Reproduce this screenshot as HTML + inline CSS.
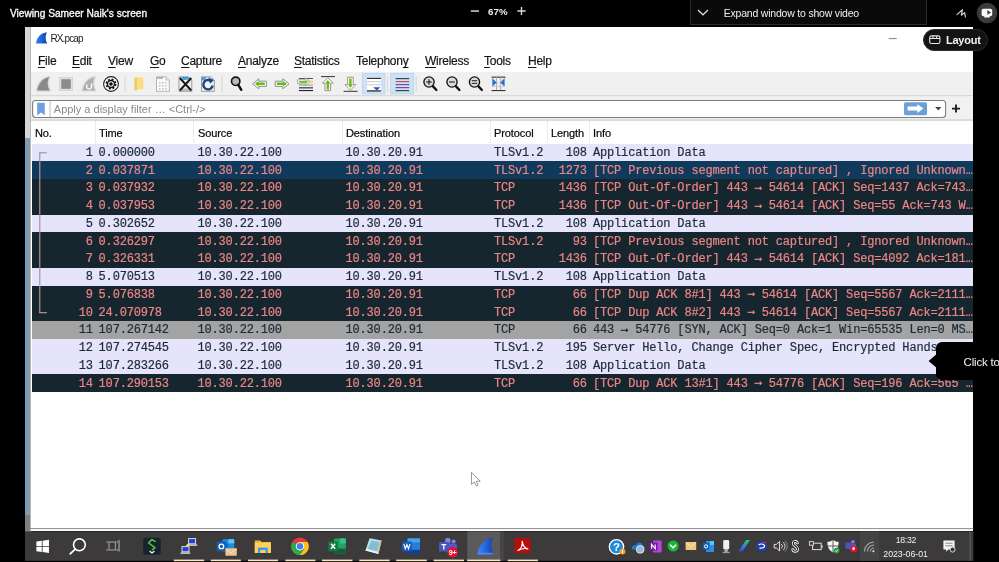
<!DOCTYPE html>
<html>
<head>
<meta charset="utf-8">
<style>
html,body{margin:0;padding:0;background:#000;}
body{width:999px;height:562px;overflow:hidden;position:relative;font-family:"Liberation Sans",sans-serif;}
.abs{position:absolute;}
body>*{will-change:transform;}
#top{left:0;top:0;width:999px;height:27px;background:#000;color:#fff;}
#title{left:10.3px;top:8px;font-size:10.2px;letter-spacing:-0.02px;white-space:nowrap;color:#f6f6f6;-webkit-text-stroke:0.35px #f6f6f6;}
#zoom{left:487.8px;top:5.9px;font-size:9.7px;font-weight:bold;color:#eee;white-space:nowrap;letter-spacing:0.05px;}
#expand{left:690px;top:-1px;width:235px;height:24.3px;border:1px solid #2c2c2c;background:#0a0a0a;}
#expand span{position:absolute;left:32.7px;top:7.3px;font-size:10.5px;letter-spacing:-0.2px;color:#f0f0f0;white-space:nowrap;}
#win{left:25px;top:27px;width:948px;height:504px;background:#fff;}
#lborder{left:25px;top:27px;width:5px;height:504.5px;background:#d6d6d6;border-right:0.7px solid #b8b8b8;}
#lborder2{left:25px;top:138px;width:5px;height:376.5px;background:#809ab2;}
#lborder3{left:25px;top:514.5px;width:5px;height:17px;background:#7f7f80;}
#wtitle{left:50.5px;top:33.2px;font-size:10px;color:#222;letter-spacing:-0.9px;}
#menu{left:0;top:0;}
.mi{position:absolute;top:54px;font-size:12px;letter-spacing:-0.25px;color:#141414;white-space:nowrap;-webkit-text-stroke:0.18px #141414;}
.mi u{text-decoration:underline;text-underline-offset:2px;text-decoration-thickness:1px;}
#toolbar{left:31px;top:72px;width:942px;height:24px;background:#f0f0f0;}
#filterrow{left:31px;top:96px;width:942px;height:24px;background:#f1f1f1;}
#filter{left:32px;top:100px;width:913px;height:16px;border:1px solid #8a8a8a;border-radius:3px;background:#fff;}
#ftext{left:53.8px;top:103.2px;font-size:11px;color:#8a8a8a;white-space:nowrap;}
#hdr{left:32px;top:121px;width:941px;height:22px;background:#fff;}
.h{position:absolute;top:126.7px;font-size:11px;color:#0a0a0a;white-space:nowrap;letter-spacing:-0.1px;-webkit-text-stroke:0.22px #0a0a0a;}
.sep{position:absolute;top:121px;width:1px;height:22px;background:#ebebeb;}
#share{left:0;top:0;width:999px;height:562px;filter:blur(0.45px);}
#rows{position:absolute;left:0;top:0;width:999px;height:0;}
.row{position:absolute;left:31.6px;width:941.4px;height:17.8px;font-family:"Liberation Mono",monospace;font-size:12px;letter-spacing:-0.17px;-webkit-text-stroke:0.2px currentColor;line-height:17.75px;white-space:pre;overflow:hidden;}
.row span{position:absolute;top:1.3px;}
.row i{font-style:normal;position:relative;top:-1.6px;-webkit-text-stroke:0.5px currentColor;}
.lav{background:#e6e4fb;color:#1c2a38;}
.blk{background:#15262e;color:#ec8585;}
.sel{background:#0f3a5b;color:#ec8585;}
.gry{background:#a3a3a3;color:#1c2a38;}
#taskbar{left:25px;top:531px;width:948px;height:30px;background:#3a3a3a;}
#tooltip{left:936.4px;top:342px;width:70px;height:38px;background:#000;border-radius:6px;}
#tooltip span{position:absolute;left:27.6px;top:13.6px;font-size:11.5px;letter-spacing:-0.2px;color:#f4f4f4;white-space:nowrap;}
#layout{left:923px;top:28.8px;width:63.4px;height:20px;border:1px solid #2c2c2c;border-radius:12px;background:#131313;}
#layout span{position:absolute;left:21.9px;top:4.2px;font-size:11px;font-weight:bold;color:#f4f4f4;letter-spacing:-0.23px;}
</style>
</head>
<body>
<div id="top" class="abs"></div>
<div id="title" class="abs">Viewing Sameer Naik's screen</div>
<div id="zoom" class="abs">67%</div>

<div id="expand" class="abs"><span>Expand window to show video</span></div>

<!--TOP--><svg class="abs" style="left:0;top:0" width="999" height="56" viewBox="0 0 999 56">
<rect x="470.8" y="10.3" width="8.2" height="1.5" fill="#d8d8d8"/>
<path d="M517.4 11 L525.6 11 M521.5 6.9 L521.5 15.1" stroke="#d8d8d8" stroke-width="1.4"/>
<path d="M698 10 L703 14.8 L708 10" fill="none" stroke="#e0e0e0" stroke-width="1.2"/>
<path d="M957 14.6 L962.4 9.6 L961.4 15.2 L964.6 12.6 L965.4 17" fill="none" stroke="#cfcfcf" stroke-width="1.2" stroke-linejoin="round" stroke-linecap="round"/>
<circle cx="987" cy="13" r="10.3" fill="#3b3b3b"/>
<rect x="981.6" y="8.8" width="10.6" height="7.4" rx="1.8" fill="#fafafa"/>
<rect x="984.2" y="16" width="5.6" height="1.6" rx="0.6" fill="#fafafa"/>
<path d="M987.4 10 L991 12.4 L987.4 14.8 Z" fill="#3b3b3b"/>
</svg><!--/TOP-->
<div id="share" class="abs">
<div id="win" class="abs"></div>
<div id="lborder" class="abs"></div>
<div id="lborder2" class="abs"></div>
<div id="lborder3" class="abs"></div>
<div id="wtitle" class="abs">RX.pcap</div>

<div class="mi" style="left:38px"><u>F</u>ile</div>
<div class="mi" style="left:72px"><u>E</u>dit</div>
<div class="mi" style="left:108px"><u>V</u>iew</div>
<div class="mi" style="left:150px"><u>G</u>o</div>
<div class="mi" style="left:181px"><u>C</u>apture</div>
<div class="mi" style="left:238px"><u>A</u>nalyze</div>
<div class="mi" style="left:294px"><u>S</u>tatistics</div>
<div class="mi" style="left:356px">Telephon<u>y</u></div>
<div class="mi" style="left:425px"><u>W</u>ireless</div>
<div class="mi" style="left:484px"><u>T</u>ools</div>
<div class="mi" style="left:528px"><u>H</u>elp</div>

<div id="toolbar" class="abs"></div>
<div id="filterrow" class="abs"></div>
<!--TB--><svg class="abs" style="left:0;top:72px" width="999" height="50" viewBox="0 72 999 50">
<!-- toolbar bottom lines -->
<rect x="31" y="95" width="942" height="1.2" fill="#d9d9d9"/>
<rect x="31" y="119.4" width="942" height="1.3" fill="#cdcdcd"/>
<!-- 1 fin gray -->
<path d="M37.2 90.4 C38.2 83.8 42.4 78.4 49.2 77 C47 81.4 47.2 86.4 49.8 90.4 Z" fill="#898989" stroke="#dadada" stroke-width="2.8" stroke-linejoin="round" paint-order="stroke"/>
<!-- 2 stop -->
<rect x="59.5" y="77.5" width="13" height="13" fill="#e2e2e2" stroke="#d0d0d0" stroke-width="0.8"/>
<rect x="61.2" y="79.2" width="9.6" height="9.6" fill="#8c8c8c"/>
<!-- 3 restart fin -->
<path d="M82.7 90.4 C83.7 83.8 87.9 78.4 94.7 77 C92.5 81.4 92.7 86.4 95.3 90.4 Z" fill="#b0b0b0" stroke="#dedede" stroke-width="2.8" stroke-linejoin="round" paint-order="stroke"/>
<path d="M91.6 83.2 L91.6 86.6 A2.5 2.5 0 1 1 87.4 84.6" fill="none" stroke="#f6f6f6" stroke-width="1.4"/>
<!-- 4 options -->
<circle cx="111" cy="84" r="7.4" fill="#fff" stroke="#222" stroke-width="1.1"/>
<circle cx="111" cy="84" r="4.7" fill="none" stroke="#111" stroke-width="1.5" stroke-dasharray="2.0 1.69"/>
<circle cx="111" cy="84" r="4.2" fill="#111"/>
<circle cx="111" cy="84" r="2.8" fill="#fff"/>
<circle cx="111" cy="84" r="1.8" fill="#111"/>
<!-- sep -->
<rect x="124.6" y="76" width="1" height="16" fill="#d4d4d4"/>
<!-- 5 folder -->
<path d="M134.5 78 L137.5 77.2 L143.5 77.8 L143.5 89 L137 89.2 L136.5 90.8 L134.5 90 Z" fill="#f9dd84"/>
<path d="M134.5 78 L137 77.4 L137 89.2 L136.5 90.8 L134.5 90 Z" fill="#f0cb62"/>
<!-- 6 save doc -->
<path d="M156.5 76.8 L166 76.8 L169.3 80 L169.3 91.3 L156.5 91.3 Z" fill="#fbfbfb" stroke="#b5b5b5" stroke-width="1"/>
<rect x="157" y="77.2" width="6" height="1.6" fill="#a8a8a8"/>
<path d="M166 76.8 L166 80 L169.3 80" fill="#e6e6e6" stroke="#b5b5b5" stroke-width="0.8"/>
<g fill="#c2c6cc"><rect x="159" y="82" width="1.6" height="1.6"/><rect x="162" y="82" width="1.6" height="1.6"/><rect x="165" y="82" width="1.6" height="1.6"/><rect x="159" y="85" width="1.6" height="1.6"/><rect x="162" y="85" width="1.6" height="1.6"/><rect x="165" y="85" width="1.6" height="1.6"/><rect x="159" y="88" width="1.6" height="1.6"/><rect x="162" y="88" width="1.6" height="1.6"/><rect x="165" y="88" width="1.6" height="1.6"/></g>
<!-- 7 close doc -->
<path d="M179 76.8 L188.5 76.8 L191.8 80 L191.8 91.3 L179 91.3 Z" fill="#f1f1f1" stroke="#9a9a9a" stroke-width="1"/>
<path d="M181.5 77 L188.5 77 L189.5 79.5 L183 80 Z" fill="#3f9ddb"/>
<rect x="181" y="88.5" width="9" height="2.3" fill="#b8bcc0"/>
<path d="M179.8 78 L191.3 90.5 M191.3 78 L179.8 90.5" stroke="#151515" stroke-width="1.9" fill="none"/>
<!-- 8 reload doc -->
<path d="M201.5 76.8 L211 76.8 L214.3 80 L214.3 91.3 L201.5 91.3 Z" fill="#f3f3f3" stroke="#9a9a9a" stroke-width="1"/>
<path d="M202 77.2 L207 77.2 L204 80.5 L202 80.5 Z" fill="#3f9ddb"/>
<path d="M210.4 80.6 A4.7 4.7 0 1 0 212.7 85.6" fill="none" stroke="#1b4488" stroke-width="2.4"/>
<path d="M208.4 77.6 L214 80 L210 83.8 Z" fill="#1b4488"/>
<!-- sep -->
<rect x="221.6" y="76" width="1" height="16" fill="#d4d4d4"/>
<!-- 9 find -->
<circle cx="235.7" cy="81.3" r="4.2" fill="#b9b9b9" stroke="#111" stroke-width="1.6"/>
<path d="M238.3 84.8 L241.3 89.8" stroke="#111" stroke-width="2.4" stroke-linecap="round"/>
<!-- 10 back -->
<path d="M252.6 83.8 L258.8 78.8 L258.8 81.2 L266.4 81.2 L266.4 86.4 L258.8 86.4 L258.8 88.8 Z" fill="#fff" stroke="#8e8e8e" stroke-width="1" stroke-linejoin="round"/>
<path d="M254.8 83.8 L258.4 81 L258.4 82.6 L264.8 82.6 L264.8 85 L258.4 85 L258.4 86.6 Z" fill="#68b81a"/>
<!-- 11 fwd -->
<path d="M289 83.8 L282.8 78.8 L282.8 81.2 L275.2 81.2 L275.2 86.4 L282.8 86.4 L282.8 88.8 Z" fill="#fff" stroke="#8e8e8e" stroke-width="1" stroke-linejoin="round"/>
<path d="M286.8 83.8 L283.2 81 L283.2 82.6 L276.8 82.6 L276.8 85 L283.2 85 L283.2 86.6 Z" fill="#68b81a"/>
<!-- 12 goto -->
<rect x="299" y="78" width="14" height="1" fill="#555"/>
<rect x="306" y="81.3" width="7" height="1" fill="#999"/>
<rect x="299" y="84.6" width="14" height="1" fill="#999"/>
<rect x="299" y="87.3" width="14" height="1.1" fill="#222"/>
<rect x="299" y="90" width="14" height="1.1" fill="#222"/>
<rect x="310" y="80.4" width="2.8" height="2.8" fill="#f6e25c"/>
<path d="M310 81.8 L305.2 77.8 L305.2 79.8 L297.6 79.8 L297.6 83.8 L305.2 83.8 L305.2 85.8 Z" fill="#fff" stroke="#9c9c9c" stroke-width="0.9" stroke-linejoin="round"/>
<path d="M308 81.8 L305.5 79.7 L305.5 80.9 L299.2 80.9 L299.2 82.7 L305.5 82.7 L305.5 83.9 Z" fill="#6cba1e"/>
<!-- 13 top -->
<rect x="321" y="76" width="14" height="1.1" fill="#444"/>
<path d="M327.8 77.6 L333.2 83.2 L330.6 83.2 L330.6 90.6 L325 90.6 L325 83.2 L322.4 83.2 Z" fill="#fff" stroke="#8c8c8c" stroke-width="0.9" stroke-linejoin="round"/>
<path d="M327.8 80 L330.6 83.4 L329 83.4 L329 89.4 L326.6 89.4 L326.6 83.4 L325 83.4 Z" fill="#6cba1e"/>
<!-- 14 bottom -->
<rect x="343.6" y="90.8" width="14" height="1.1" fill="#444"/>
<path d="M350.4 90.2 L355.8 84.6 L353.2 84.6 L353.2 77.2 L347.6 77.2 L347.6 84.6 L345 84.6 Z" fill="#fff" stroke="#8c8c8c" stroke-width="0.9" stroke-linejoin="round"/>
<path d="M350.4 87.8 L353.2 84.4 L351.6 84.4 L351.6 78.4 L349.2 78.4 L349.2 84.4 L347.6 84.4 Z" fill="#6cba1e"/>
<!-- 15 autoscroll -->
<rect x="362.3" y="73.3" width="22.6" height="20.6" fill="#cbe2f8" stroke="#b4d4f2" stroke-width="0.8"/>
<rect x="367" y="77.6" width="14" height="12.6" fill="#fff"/>
<rect x="367" y="77.8" width="14" height="1.2" fill="#333"/>
<rect x="367" y="81.2" width="14" height="1" fill="#c8c8c8"/>
<rect x="367" y="84.3" width="14" height="1" fill="#c8c8c8"/>
<rect x="367" y="90.3" width="14" height="1.3" fill="#333"/>
<path d="M373.2 87.2 L380.4 87.2 L376.8 90.6 Z" fill="#2c50b4"/>
<rect x="387" y="76" width="1" height="16" fill="#d9d9d9"/>
<!-- 16 colorize -->
<rect x="390.7" y="73.3" width="23" height="20.6" fill="#cbe2f8" stroke="#b4d4f2" stroke-width="0.8"/>
<rect x="395.6" y="78" width="13.6" height="1.2" fill="#444"/>
<rect x="395.6" y="81" width="13.6" height="1.2" fill="#d6474a"/>
<rect x="395.6" y="84" width="13.6" height="1.2" fill="#4562b4"/>
<rect x="395.6" y="87" width="13.6" height="1.2" fill="#9a4078"/>
<rect x="395.6" y="90" width="13.6" height="1.2" fill="#444"/>
<rect x="415.7" y="76" width="1" height="16" fill="#dcd6d2"/>
<!-- 17-19 zoom -->
<g stroke="#111" fill="none">
<circle cx="429" cy="82" r="5.1" fill="#dadada" stroke-width="1.35"/><path d="M433 86.4 L436.4 90" stroke-width="2.3" stroke-linecap="round"/><path d="M426.2 82 L431.8 82 M429 79.2 L429 84.8" stroke-width="1.05"/>
<circle cx="452" cy="82" r="5.1" fill="#dadada" stroke-width="1.35"/><path d="M456 86.4 L459.4 90" stroke-width="2.3" stroke-linecap="round"/><path d="M449.2 82 L454.8 82" stroke-width="1.05"/>
<circle cx="474.5" cy="82" r="5.1" fill="#dadada" stroke-width="1.35"/><path d="M478.5 86.4 L481.9 90" stroke-width="2.3" stroke-linecap="round"/><path d="M471.8 80.7 L477.2 80.7 M471.8 83.3 L477.2 83.3" stroke-width="0.95"/>
</g>
<!-- 20 resize cols -->
<rect x="491.5" y="76.6" width="14" height="1.1" fill="#333"/>
<rect x="491.5" y="90" width="14" height="1.1" fill="#333"/>
<rect x="496" y="77" width="0.9" height="13" fill="#aaa"/><rect x="500.2" y="77" width="0.9" height="13" fill="#aaa"/>
<rect x="493" y="82.6" width="11" height="0.8" fill="#c4c4c4"/><rect x="493" y="86" width="11" height="0.8" fill="#c4c4c4"/>
<path d="M492.4 78 L496.6 82.4 L492.4 86.8 Z" fill="#2f6fd0"/>
<path d="M504.6 78 L500.4 82.4 L504.6 86.8 Z" fill="#2f6fd0"/>
<!-- filter bar -->
<rect x="32.6" y="100.5" width="913" height="17" rx="3" fill="#fff" stroke="#7d7d7d" stroke-width="1.1"/>
<rect x="49.6" y="101" width="0.9" height="16" fill="#b5b5b5"/>
<path d="M37.2 102.8 L44.8 102.8 L44.8 115.6 L41 112.4 L37.2 115.6 Z" fill="#70a0de"/>
<rect x="904" y="102.2" width="23" height="13" rx="1.6" fill="#6d9fd8"/>
<path d="M907.6 106.6 L917.4 106.6 L917.4 104.2 L923.4 108.6 L917.4 113 L917.4 110.6 L907.6 110.6 Z" fill="#fff"/>
<path d="M935.2 107 L941.4 107 L938.3 110.6 Z" fill="#444"/>
<path d="M952 108.6 L960 108.6 M956 104.6 L956 112.6" stroke="#1e1e1e" stroke-width="1.9"/>
</svg>
<!--/TB-->
<div id="ftext" class="abs">Apply a display filter &#8230; &lt;Ctrl-/&gt;</div>

<div id="hdr" class="abs"></div>
<div class="h" style="left:35px">No.</div>
<div class="h" style="left:99px">Time</div>
<div class="h" style="left:198px">Source</div>
<div class="h" style="left:346px">Destination</div>
<div class="h" style="left:494px">Protocol</div>
<div class="h" style="left:551px">Length</div>
<div class="h" style="left:593px">Info</div>
<div class="sep" style="left:95px"></div>
<div class="sep" style="left:193px"></div>
<div class="sep" style="left:342px"></div>
<div class="sep" style="left:490px"></div>
<div class="sep" style="left:547px"></div>
<div class="sep" style="left:589px"></div>

<div id="rows">
<div class="row lav" style="top:143.60px"><span style="right:880.3px">1</span><span style="left:67px">0.000000</span><span style="left:165.9px">10.30.22.100</span><span style="left:313.9px">10.30.20.91</span><span style="left:462.4px">TLSv1.2</span><span style="right:386.2px">108</span><span style="left:561.4px">Application Data</span></div>
<div class="row sel" style="top:161.35px"><span style="right:880.3px">2</span><span style="left:67px">0.037871</span><span style="left:165.9px">10.30.22.100</span><span style="left:313.9px">10.30.20.91</span><span style="left:462.4px">TLSv1.2</span><span style="right:386.2px">1273</span><span style="left:561.4px">[TCP Previous segment not captured] , Ignored Unknown…</span></div>
<div class="row blk" style="top:179.10px"><span style="right:880.3px">3</span><span style="left:67px">0.037932</span><span style="left:165.9px">10.30.22.100</span><span style="left:313.9px">10.30.20.91</span><span style="left:462.4px">TCP</span><span style="right:386.2px">1436</span><span style="left:561.4px">[TCP Out-Of-Order] 443 <i>→</i> 54614 [ACK] Seq=1437 Ack=743…</span></div>
<div class="row blk" style="top:196.85px"><span style="right:880.3px">4</span><span style="left:67px">0.037953</span><span style="left:165.9px">10.30.22.100</span><span style="left:313.9px">10.30.20.91</span><span style="left:462.4px">TCP</span><span style="right:386.2px">1436</span><span style="left:561.4px">[TCP Out-Of-Order] 443 <i>→</i> 54614 [ACK] Seq=55 Ack=743 W…</span></div>
<div class="row lav" style="top:214.60px"><span style="right:880.3px">5</span><span style="left:67px">0.302652</span><span style="left:165.9px">10.30.22.100</span><span style="left:313.9px">10.30.20.91</span><span style="left:462.4px">TLSv1.2</span><span style="right:386.2px">108</span><span style="left:561.4px">Application Data</span></div>
<div class="row blk" style="top:232.35px"><span style="right:880.3px">6</span><span style="left:67px">0.326297</span><span style="left:165.9px">10.30.22.100</span><span style="left:313.9px">10.30.20.91</span><span style="left:462.4px">TLSv1.2</span><span style="right:386.2px">93</span><span style="left:561.4px">[TCP Previous segment not captured] , Ignored Unknown…</span></div>
<div class="row blk" style="top:250.10px"><span style="right:880.3px">7</span><span style="left:67px">0.326331</span><span style="left:165.9px">10.30.22.100</span><span style="left:313.9px">10.30.20.91</span><span style="left:462.4px">TCP</span><span style="right:386.2px">1436</span><span style="left:561.4px">[TCP Out-Of-Order] 443 <i>→</i> 54614 [ACK] Seq=4092 Ack=181…</span></div>
<div class="row lav" style="top:267.85px"><span style="right:880.3px">8</span><span style="left:67px">5.070513</span><span style="left:165.9px">10.30.22.100</span><span style="left:313.9px">10.30.20.91</span><span style="left:462.4px">TLSv1.2</span><span style="right:386.2px">108</span><span style="left:561.4px">Application Data</span></div>
<div class="row blk" style="top:285.60px"><span style="right:880.3px">9</span><span style="left:67px">5.076838</span><span style="left:165.9px">10.30.22.100</span><span style="left:313.9px">10.30.20.91</span><span style="left:462.4px">TCP</span><span style="right:386.2px">66</span><span style="left:561.4px">[TCP Dup ACK 8#1] 443 <i>→</i> 54614 [ACK] Seq=5567 Ack=2111…</span></div>
<div class="row blk" style="top:303.35px"><span style="right:880.3px">10</span><span style="left:67px">24.070978</span><span style="left:165.9px">10.30.22.100</span><span style="left:313.9px">10.30.20.91</span><span style="left:462.4px">TCP</span><span style="right:386.2px">66</span><span style="left:561.4px">[TCP Dup ACK 8#2] 443 <i>→</i> 54614 [ACK] Seq=5567 Ack=2111…</span></div>
<div class="row gry" style="top:321.10px"><span style="right:880.3px">11</span><span style="left:67px">107.267142</span><span style="left:165.9px">10.30.22.100</span><span style="left:313.9px">10.30.20.91</span><span style="left:462.4px">TCP</span><span style="right:386.2px">66</span><span style="left:561.4px">443 <i>→</i> 54776 [SYN, ACK] Seq=0 Ack=1 Win=65535 Len=0 MS…</span></div>
<div class="row lav" style="top:338.85px"><span style="right:880.3px">12</span><span style="left:67px">107.274545</span><span style="left:165.9px">10.30.22.100</span><span style="left:313.9px">10.30.20.91</span><span style="left:462.4px">TLSv1.2</span><span style="right:386.2px">195</span><span style="left:561.4px">Server Hello, Change Cipher Spec, Encrypted Hands…</span></div>
<div class="row lav" style="top:356.60px"><span style="right:880.3px">13</span><span style="left:67px">107.283266</span><span style="left:165.9px">10.30.22.100</span><span style="left:313.9px">10.30.20.91</span><span style="left:462.4px">TLSv1.2</span><span style="right:386.2px">108</span><span style="left:561.4px">Application Data</span></div>
<div class="row blk" style="top:374.35px"><span style="right:880.3px">14</span><span style="left:67px">107.290153</span><span style="left:165.9px">10.30.22.100</span><span style="left:313.9px">10.30.20.91</span><span style="left:462.4px">TCP</span><span style="right:386.2px">66</span><span style="left:561.4px">[TCP Dup ACK 13#1] 443 <i>→</i> 54776 [ACK] Seq=196 Ack=565 …</span></div>
</div><!--/rows-->

<!--TREE--><svg class="abs" style="left:0;top:27px" width="999" height="380" viewBox="0 27 999 380">
<defs><linearGradient id="gf2" x1="0" y1="0" x2="1" y2="0"><stop offset="0" stop-color="#3580ea"/><stop offset="0.55" stop-color="#1f60d6"/><stop offset="1" stop-color="#143fa8"/></linearGradient></defs>
<path d="M36 43.5 C36.8 37.4 40.4 33 46.9 32.2 C45.2 35.8 45.2 39.8 47.2 43.5 Z" fill="url(#gf2)"/>
<rect x="888.8" y="38" width="7.8" height="1.1" fill="#8a8a8a"/>
<g fill="#8d8d92">
<rect x="39.3" y="152.3" width="7.6" height="1"/>
<rect x="39.3" y="152.3" width="1" height="9"/>
<rect x="39.3" y="214.6" width="1" height="17.8"/>
<rect x="39.3" y="267.8" width="1" height="17.8"/>
</g>
<g fill="#d9a3a4">
<rect x="39.3" y="161.3" width="1" height="53.3"/>
<rect x="39.3" y="232.4" width="1" height="35.4"/>
<rect x="39.3" y="285.6" width="1" height="27.4"/>
<rect x="39.3" y="312.2" width="7.6" height="1"/>
</g>
</svg><!--/TREE-->
<!--TASK--><svg class="abs" style="left:0;top:526px" width="999" height="36" viewBox="0 526 999 36">
<rect x="30" y="528" width="943.4" height="1.1" fill="#969696"/>
<rect x="25" y="531.4" width="948.4" height="29.4" fill="#3c3a3b"/>
<rect x="969.6" y="531.4" width="1.2" height="29.4" fill="#5c5a5b"/>
<!-- active wireshark -->
<rect x="467.2" y="531.4" width="33.2" height="29.4" fill="#5b595a"/>
<rect x="500.4" y="531.4" width="3.4" height="29.4" fill="#474546"/>
<rect x="859.6" y="531.4" width="19.6" height="29.4" fill="#454344"/>
<!-- underlines -->
<g fill="#f7e4bd">
<rect x="173.8" y="559.6" width="30.4" height="1.6"/><rect x="210.8" y="559.6" width="30" height="1.6"/><rect x="248" y="559.6" width="30" height="1.6"/><rect x="285.4" y="559.6" width="30" height="1.6"/>
<rect x="322" y="559.6" width="30.4" height="1.6"/><rect x="359.3" y="559.6" width="30.3" height="1.6"/><rect x="396.2" y="559.6" width="30.6" height="1.6"/><rect x="433.6" y="559.6" width="30.4" height="1.6"/>
<rect x="467.2" y="559.6" width="33.2" height="1.6"/><rect x="507.7" y="559.6" width="30.2" height="1.6"/>
</g>
<!-- windows -->
<g fill="#fff"><path d="M36.4 541.6 L41.8 540.8 L41.8 546 L36.4 546 Z"/><path d="M42.6 540.7 L49 539.8 L49 546 L42.6 546 Z"/><path d="M36.4 546.8 L41.8 546.8 L41.8 552 L36.4 551.2 Z"/><path d="M42.6 546.8 L49 546.8 L49 553 L42.6 552.1 Z"/></g>
<!-- search -->
<circle cx="79.4" cy="544.8" r="5.9" fill="none" stroke="#fff" stroke-width="1.6"/>
<path d="M75.2 549.2 L70.2 553.9" stroke="#fff" stroke-width="1.7" stroke-linecap="round"/>
<!-- task view -->
<g fill="none" stroke="#9c9c9c" stroke-width="1.1"><rect x="109" y="542" width="6.4" height="8"/><path d="M107.2 541 L107.2 543 M107.2 549 L107.2 551 M117.2 541 L117.2 543 M117.2 549 L117.2 551"/></g>
<rect x="118.4" y="540" width="1.3" height="11.6" fill="#9c9c9c"/>
<!-- green S app -->
<rect x="143.2" y="537.8" width="17.6" height="17" rx="2" fill="#17242e"/>
<path d="M155.6 541.6 L151.8 539.6 L148.6 543 L155 547.6 L152 550" fill="none" stroke="#5cc93c" stroke-width="1.5" stroke-linejoin="round"/>
<path d="M149.6 551 L152 553 L154.4 551" fill="none" stroke="#fff" stroke-width="1.1"/>
<!-- network -->
<rect x="188.6" y="538.6" width="7" height="5.2" fill="#2a3fd6" stroke="#e8e8e8" stroke-width="0.9"/><rect x="187.6" y="544.4" width="9.6" height="1.4" fill="#e0e0e0"/>
<rect x="182" y="546.6" width="7" height="5.2" fill="#2a3fd6" stroke="#e8e8e8" stroke-width="0.9"/><rect x="180.6" y="552.4" width="9.6" height="1.4" fill="#e0e0e0"/>
<path d="M186.4 546 L189.4 543.6" stroke="#f2e24a" stroke-width="1.8"/>
<!-- outlook -->
<rect x="222.6" y="539.2" width="11.6" height="12.4" rx="1" fill="#1a8fe0"/>
<rect x="228.4" y="539.2" width="5.8" height="4.2" fill="#5cc4f5"/><rect x="222.6" y="543.4" width="5.8" height="4.2" fill="#0f6cbd"/>
<rect x="216.6" y="541.6" width="9.6" height="9.6" rx="1.2" fill="#0f5fb3"/>
<circle cx="221.4" cy="546.4" r="2.3" fill="none" stroke="#fff" stroke-width="1.3"/>
<rect x="225.4" y="548.2" width="11.4" height="7.6" rx="0.8" fill="#f1c18c"/>
<path d="M225.8 548.8 L231.1 553 L236.4 548.8" fill="none" stroke="#fbe6cc" stroke-width="1"/>
<!-- folder -->
<path d="M254.8 540.6 L260.4 540.6 L261.6 542 L270.9 542 L270.9 553 L254.8 553 Z" fill="#f2b62c"/>
<rect x="254.8" y="542.6" width="16.1" height="10.4" fill="#fbd25c"/>
<rect x="258" y="547.6" width="9.8" height="5.4" fill="#3b9bea"/><rect x="260.2" y="550" width="5.4" height="3" fill="#fbd25c"/>
<!-- chrome -->
<circle cx="300" cy="546.3" r="8.8" fill="#e33b2e"/>
<path d="M300 546.3 L292.4 541.9 A8.8 8.8 0 0 0 300 555.1 L304.4 548.9 Z" fill="#2da94f"/>
<path d="M300 546.3 L304.4 548.9 L300 555.1 A8.8 8.8 0 0 0 307.6 541.9 L300 541.9 Z" fill="#fcc31e"/>
<circle cx="300" cy="546.3" r="4.1" fill="#fff"/><circle cx="300" cy="546.3" r="3.2" fill="#3f82ef"/>
<!-- excel -->
<rect x="334" y="538.4" width="11.8" height="15.4" rx="1" fill="#21a366"/><rect x="339.9" y="538.4" width="5.9" height="5.2" fill="#33c481"/><rect x="334" y="548.6" width="11.8" height="5.2" fill="#185c37"/>
<rect x="328.2" y="541.4" width="9.8" height="9.8" rx="1.2" fill="#107c41"/>
<path d="M331 543.8 L335.2 548.8 M335.2 543.8 L331 548.8" stroke="#fff" stroke-width="1.4"/>
<!-- notepad -->
<path d="M369.6 538.2 L381.6 540.6 L378.4 554 L365.4 550.6 Z" fill="#b9e0ee"/>
<path d="M371.4 540.6 L379.6 542.2 L377 551.8 L367.6 549.4 Z" fill="#84bcd2"/>
<path d="M365.4 550.6 L378.4 554 L377.4 551.6 L366.6 548.8 Z" fill="#e8f2f6"/>
<path d="M379.8 541 L381.6 540.6 L378.4 554 L377.4 552 Z" fill="#d9c38a"/>
<!-- word -->
<rect x="407.6" y="538.4" width="12.4" height="15.4" rx="1" fill="#2b7cd3"/><rect x="407.6" y="538.4" width="12.4" height="4" fill="#41a5ee"/><rect x="407.6" y="549.8" width="12.4" height="4" fill="#103f91"/>
<rect x="402" y="541.4" width="9.8" height="9.8" rx="1.2" fill="#185abd"/>
<path d="M403.8 544 L405.3 548.8 L406.9 544.6 L408.5 548.8 L410 544" fill="none" stroke="#fff" stroke-width="1.1"/>
<!-- teams -->
<circle cx="453.6" cy="541.6" r="2" fill="#7b83eb"/><circle cx="447.8" cy="540.6" r="2.8" fill="#7b83eb"/>
<rect x="444.6" y="543.6" width="12.4" height="8" rx="2.4" fill="#5059c9"/>
<rect x="439" y="542" width="9.6" height="9.6" rx="1.2" fill="#4b53bc"/>
<path d="M441.4 544.6 L446.2 544.6 M443.8 544.6 L443.8 549.4" stroke="#fff" stroke-width="1.3"/>
<circle cx="452.6" cy="552.2" r="5.3" fill="#e2142d"/>
<text x="452.5" y="554.8" font-family="Liberation Sans" font-size="7" font-weight="bold" fill="#fff" text-anchor="middle" letter-spacing="-0.3">9+</text>
<!-- wireshark fin -->
<defs><linearGradient id="gf" x1="0" y1="0" x2="1" y2="0"><stop offset="0" stop-color="#3b86f0"/><stop offset="0.55" stop-color="#2263dc"/><stop offset="1" stop-color="#143fa8"/></linearGradient></defs>
<path d="M477.4 554.4 C478.4 545.2 483.6 539.2 492.8 537.8 C490.6 543 490.8 549 493.4 554.4 Z" fill="url(#gf)"/>
<path d="M477.4 554.4 L493.4 554.4 L492.8 552.8 L477.8 552.8 Z" fill="#5a94f0" opacity="0.8"/>
<!-- adobe -->
<rect x="514.4" y="538" width="16.2" height="15.3" rx="2" fill="#b60f0a"/>
<path d="M518 550.4 C521.2 548.6 522.6 544.8 522.2 541.4 C523 546 525 548.4 527.8 548.8 C524.4 548 521 548.8 518 550.4 Z" fill="none" stroke="#fff" stroke-width="1.2" stroke-linejoin="round"/>
<!-- tray: help -->
<circle cx="616.5" cy="546.8" r="7.2" fill="#1b8bd9" stroke="#fff" stroke-width="1.3"/>
<text x="616.4" y="551" font-family="Liberation Sans" font-size="11.5" font-weight="bold" fill="#fff" text-anchor="middle">?</text>
<circle cx="622.4" cy="551.6" r="3" fill="#f0a030"/><rect x="622" y="549.8" width="0.9" height="3.6" fill="#fff"/>
<!-- onedrive -->
<path d="M632 549.6 C631 546.6 633.6 544.6 635.8 545.2 C636.8 541.8 641.8 541.6 642.8 545.4 C645 545.4 645.4 549.6 643 549.6 Z" fill="#1c7ad4"/>
<circle cx="640.2" cy="549.4" r="3.9" fill="#9fb6d0" stroke="#e6eef6" stroke-width="0.8"/>
<!-- onenote -->
<rect x="653" y="540.6" width="8.6" height="12" rx="0.8" fill="#ae4bd5"/><rect x="649.5" y="542.4" width="8" height="8.4" rx="0.8" fill="#7719aa"/>
<path d="M651.6 548.8 L651.6 544.4 L655.2 548.8 L655.2 544.4" fill="none" stroke="#fff" stroke-width="1.1"/>
<!-- green -->
<circle cx="673.1" cy="546" r="5.5" fill="#17b83a"/><path d="M670.2 544.8 L673.1 547.8 L676 544.8" fill="none" stroke="#fff" stroke-width="1.5"/>
<!-- mail -->
<rect x="685.6" y="542" width="10.6" height="8" rx="0.6" fill="#f1c680"/><path d="M686 542.6 L690.9 546.8 L695.8 542.6" fill="none" stroke="#fae6c0" stroke-width="1"/>
<!-- outlook small -->
<rect x="706" y="541" width="8" height="11" rx="0.6" fill="#2a90e4"/><rect x="710" y="541" width="4" height="4" fill="#5cc4f5"/><rect x="702.8" y="543" width="6.6" height="6.8" rx="0.8" fill="#0f5fb3"/><circle cx="706.1" cy="546.4" r="1.6" fill="none" stroke="#fff" stroke-width="1"/>
<!-- usb -->
<rect x="723.2" y="540" width="6" height="9.4" rx="1.4" fill="#f0f0f0"/><rect x="724.6" y="549.4" width="3.2" height="2.4" fill="#b8b8b8"/><rect x="722.6" y="551.8" width="7.2" height="1.3" fill="#a0a0a0"/>
<!-- blue slash -->
<defs><linearGradient id="gs" x1="0" y1="0" x2="0" y2="1"><stop offset="0" stop-color="#2fc86a"/><stop offset="0.5" stop-color="#2a8ae8"/><stop offset="1" stop-color="#2a4fd8"/></linearGradient></defs>
<path d="M746 540 L750 540 L742.6 551.2 L738.6 551.2 Z" fill="url(#gs)"/>
<!-- blue circle -->
<circle cx="761.7" cy="546" r="5.6" fill="#1d3ea6"/><path d="M758.6 545 C760.4 543.4 763.6 543.8 764.6 545.6 C765 547.6 762 548.6 759.4 548" fill="none" stroke="#fff" stroke-width="1.2"/><rect x="762" y="542.2" width="4" height="1" fill="#e03030"/>
<!-- speaker -->
<path d="M774.2 544.4 L776.4 544.4 L779.6 541.4 L779.6 551 L776.4 548 L774.2 548 Z" fill="none" stroke="#e6e6e6" stroke-width="1"/>
<path d="M781.4 544 A3 3 0 0 1 781.4 548.4 M783.2 542.2 A5.4 5.4 0 0 1 783.2 550.2" fill="none" stroke="#d0d0d0" stroke-width="1"/>
<path d="M785 540.8 A7.6 7.6 0 0 1 785 551.6" fill="none" stroke="#909090" stroke-width="0.9"/>
<!-- S -->
<path d="M797.4 542.8 C796.2 540.6 792.8 541.4 793.4 543.8 C794 546 798 546.6 797.6 549.4 C797 552 793.4 551.8 792.8 549.6" fill="none" stroke="#fff" stroke-width="2.8" stroke-linecap="round"/>
<path d="M797.4 542.8 C796.2 540.6 792.8 541.4 793.4 543.8 C794 546 798 546.6 797.6 549.4 C797 552 793.4 551.8 792.8 549.6" fill="none" stroke="#111" stroke-width="1.1" stroke-linecap="round"/>
<!-- battery -->
<rect x="812.6" y="543.2" width="8.6" height="6.4" fill="none" stroke="#dcdcdc" stroke-width="1"/><rect x="821.4" y="545.2" width="1.2" height="2.6" fill="#dcdcdc"/>
<rect x="809.4" y="541.6" width="4" height="3.6" fill="#3c3a3b" stroke="#dcdcdc" stroke-width="0.9"/>
<!-- shield -->
<path d="M833 540 C835 541.4 837 541.8 838.6 541.8 C838.8 547 837 550.4 833 552.4 C829 550.4 827.2 547 827.4 541.8 C829 541.8 831 541.4 833 540 Z" fill="#f4f4f4"/>
<path d="M833 540 L833 552.4 M827.4 546 L838.6 546" stroke="#3c3a3b" stroke-width="0.8"/>
<circle cx="836.6" cy="550.6" r="2.9" fill="#13a538"/><path d="M835.2 550.6 L836.3 551.7 L838.2 549.6" fill="none" stroke="#fff" stroke-width="0.9"/>
<!-- teams small -->
<circle cx="853" cy="541.8" r="1.8" fill="#7b83eb"/><rect x="848.6" y="543.4" width="7.4" height="6.4" rx="1.6" fill="#5059c9"/><rect x="845.4" y="542.4" width="6.4" height="6.4" rx="0.8" fill="#4b53bc"/>
<circle cx="853.6" cy="549" r="3.4" fill="#e2142d"/><ellipse cx="853.6" cy="548.6" rx="1.2" ry="1.7" fill="#fff"/>
<!-- wifi -->
<g fill="none" stroke="#a8a8a8" stroke-width="1.1"><path d="M864.4 551.6 A9.6 9.6 0 0 1 874 542"/><path d="M867.4 551.6 A6.6 6.6 0 0 1 874 545"/><path d="M870.4 551.6 A3.6 3.6 0 0 1 874 548"/></g><circle cx="873.4" cy="551.2" r="1" fill="#e8e8e8"/>
<!-- clock -->
<text x="905.9" y="543.1" font-family="Liberation Sans" font-size="8.7" fill="#f2f2f2" text-anchor="middle" letter-spacing="-0.25">18:32</text>
<text x="905.6" y="556.7" font-family="Liberation Sans" font-size="8.8" fill="#f2f2f2" text-anchor="middle" letter-spacing="-0.05">2023-06-01</text>
<!-- notification -->
<path d="M943.4 540.4 L954.6 540.4 L954.6 549.4 L948.4 549.4 L946.2 551.8 L946.2 549.4 L943.4 549.4 Z" fill="#f4f4f4"/>
<path d="M945.4 543.2 L952.6 543.2 M945.4 545.8 L952.6 545.8" stroke="#7a7a7a" stroke-width="0.9"/>
<circle cx="952.6" cy="549.6" r="2.5" fill="#3c3a3b" stroke="#e8e8e8" stroke-width="0.9"/>
</svg>
<!--/TASK-->
</div><!--/share-->
<div id="tooltip" class="abs"><span>Click to</span></div>
<svg class="abs" style="left:925px;top:350px" width="14" height="22" viewBox="925 350 14 22"><path d="M928.6 361 L937.4 353.4 L937.4 368.6 Z" fill="#000"/></svg>
<svg class="abs" style="left:468px;top:469px" width="16" height="20" viewBox="468 469 16 20"><path d="M471.5 472.4 L471.5 484.4 L474.3 482 L476.4 486.2 L478.2 485.3 L476.2 481.3 L480.3 481.3 Z" fill="#fff" stroke="#8c8c8c" stroke-width="0.9" stroke-linejoin="round"/></svg>
<div id="layout" class="abs"><span>Layout</span><svg style="position:absolute;left:5.4px;top:5.3px" width="12" height="11" viewBox="0 0 12 11"><rect x="0.7" y="0.9" width="10.2" height="7.6" rx="1.8" fill="none" stroke="#e8e8e8" stroke-width="1.1"/><path d="M0.8 3.5 L10.8 3.5 M4 1 L4 3.2 M7.6 1 L7.6 3.2" stroke="#e8e8e8" stroke-width="1"/></svg></div>
</body>
</html>
